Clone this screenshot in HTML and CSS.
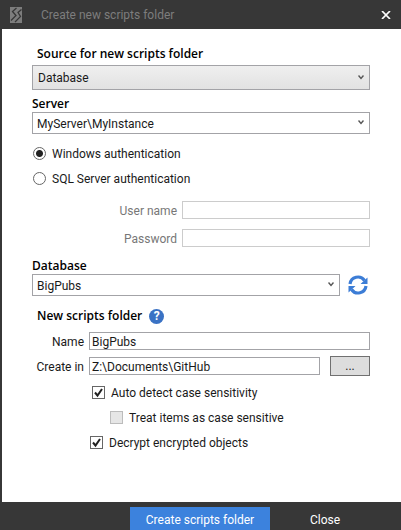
FILE: index.html
```html
<!DOCTYPE html>
<html lang="en">
  <head>
    <meta charset="UTF-8" />
    <meta name="viewport" content="width=device-width, initial-scale=1.0" />
    <title>Create new scripts folder</title>
    <link rel="stylesheet" href="styles.css">
  </head>
  <body>
    <div class="dialog">
      <header class="title-bar">
        <svg class="logo" viewBox="0 0 12 16" aria-hidden="true">
          <rect width="12" height="16" fill="#7d7d7d" />
          <path d="M6.5 1 L2.5 4.5 L6 8.5 L1 13.5 M11.5 2.5 L8 5.5 L10.5 9.5 L5 15" fill="none" stroke="#373737" stroke-width="1.3" />
        </svg>
        <h1 class="title">Create new scripts folder</h1>
        <button type="button" class="close-icon" aria-label="Close window">
          <svg viewBox="0 0 10 8" width="10" height="8">
            <path d="M1 0 L9 8 M9 0 L1 8" stroke="#fff" stroke-width="1.7" />
          </svg>
        </button>
      </header>

      <form class="form" id="scripts-form">
        <label class="heading indent" for="source">Source for new scripts folder</label>
        <div class="select-box">
          <select id="source" class="source">
            <option>Database</option>
          </select>
          <svg class="arrow" viewBox="0 0 6 5"><path d="M0.5 0.5 L3 3.5 L5.5 0.5" /></svg>
        </div>

        <label class="heading" for="server">Server</label>
        <div class="select-box">
          <select id="server">
            <option>MyServer\MyInstance</option>
          </select>
          <svg class="arrow" viewBox="0 0 6 5"><path d="M0.5 0.5 L3 3.5 L5.5 0.5" /></svg>
        </div>

        <div class="options auth">
          <label class="option"><input type="radio" name="auth" checked /><span>Windows authentication</span></label>
          <label class="option"><input type="radio" name="auth" /><span>SQL Server authentication</span></label>
        </div>

        <div class="credentials">
          <label for="user">User name</label>
          <input type="text" id="user" disabled />
          <label for="password">Password</label>
          <input type="password" id="password" disabled />
        </div>

        <label class="heading database" for="database">Database</label>
        <div class="database-row">
          <div class="select-box">
            <select id="database">
              <option>BigPubs</option>
            </select>
            <svg class="arrow" viewBox="0 0 6 5"><path d="M0.5 0.5 L3 3.5 L5.5 0.5" /></svg>
          </div>
          <button type="button" class="refresh" aria-label="Refresh databases">
            <svg viewBox="0 0 20 20" width="20" height="20">
              <g fill="none" stroke="#3c7dd6" stroke-width="3.2">
                <path d="M2 9 A8 8 0 0 1 16.5 5.5" />
                <path d="M18 11 A8 8 0 0 1 3.5 14.5" />
              </g>
              <path d="M19.5 2.5 V9 H12.5 Z M0.5 17.5 V11 H7.5 Z" fill="#3c7dd6" />
            </svg>
          </button>
        </div>

        <div class="folder-heading">
          <h2>New scripts folder</h2>
          <button type="button" class="help" aria-label="Help">?</button>
        </div>
        <div class="folder">
          <label for="name">Name</label>
          <input type="text" id="name" value="BigPubs" />
          <label for="path">Create in</label>
          <div class="path-row">
            <input type="text" id="path" value="Z:\Documents\GitHub" />
            <button type="button" class="browse">...</button>
          </div>
        </div>

        <div class="options checks">
          <label class="option auto"><input type="checkbox" checked /><span>Auto detect case sensitivity</span></label>
          <label class="option nested"><input type="checkbox" disabled /><span>Treat items as case sensitive</span></label>
          <label class="option"><input type="checkbox" checked /><span>Decrypt encrypted objects</span></label>
        </div>
      </form>

      <footer class="footer">
        <button type="submit" form="scripts-form" class="create">Create scripts folder</button>
        <button type="button" class="close">Close</button>
      </footer>
    </div>
  </body>
</html>
```

FILE: styles.css
```css
* {
  box-sizing: border-box;
}
body {
  margin: 0;
  background-color: #373737;
}
body,
input,
select,
button {
  font-family: Roboto, "Open Sans", sans-serif;
  font-size: 12px;
  line-height: 16px;
  color: #1a1a1a;
}
button {
  border: none;
  background: none;
  padding: 0;
}
.dialog {
  min-height: 100vh;
  display: flex;
  flex-direction: column;
}

/* title bar */
.title-bar {
  display: flex;
  align-items: center;
  height: 29px;
  padding: 0 10px;
}
.logo {
  width: 12px;
  height: 16px;
  margin-right: 19px;
}
.title {
  flex: 1;
  margin: 0;
  font-size: 12px;
  font-weight: 400;
  color: #7d7d7d;
}
.close-icon {
  display: flex;
}

/* form */
.form {
  flex: 1;
  margin-left: 2px;
  padding: 17px 31px 20px 30px;
  background-color: #fff;
}
.heading {
  display: block;
  height: 16px;
  margin-top: 6px;
}
.heading,
.folder-heading h2 {
  font-family: "Open Sans", "Noto Sans", sans-serif;
  font-size: 12px;
  font-weight: 600;
  color: #000;
}
.heading.indent {
  height: 19px;
  margin-top: 0;
  padding-left: 5px;
}
.heading.database {
  margin-top: 11px;
}
.select-box {
  position: relative;
  flex: 1;
}
.select-box select {
  display: block;
  width: 100%;
  height: 22px;
  padding: 2px 20px 0 4px;
  border: 1px solid #a3a3a7;
  border-radius: 0;
  background-color: #fff;
  appearance: none;
}
.select-box .source {
  height: 25px;
  padding: 0 20px 0 5px;
  background: linear-gradient(#efefef, #e2e2e2);
}
.arrow {
  position: absolute;
  top: 50%;
  right: 6px;
  width: 6px;
  height: 5px;
  margin-top: -3px;
  fill: none;
  stroke: #555;
  stroke-width: 1.4;
  pointer-events: none;
}

.options {
  display: flex;
  flex-direction: column;
  gap: 7px;
}
.option {
  display: flex;
  align-items: center;
  gap: 6px;
  height: 18px;
}
.option span {
  padding-top: 2px;
}
.option input {
  width: 13px;
  height: 13px;
  margin: 0;
  border: 1px solid #666;
  background: #fff center no-repeat;
  appearance: none;
}
.auth {
  margin-top: 10px;
  padding-left: 1px;
}
.option input[type="radio"] {
  border-radius: 50%;
}
.option input[type="radio"]:checked {
  background-image: radial-gradient(circle, #222 3px, transparent 4px);
}
.option input[type="checkbox"]:checked {
  background-image: url("data:image/svg+xml,%3Csvg xmlns='http://www.w3.org/2000/svg' width='11' height='11'%3E%3Cpath d='M2 5.5 L4.5 8.5 L9 2' fill='none' stroke='%23222' stroke-width='2'/%3E%3C/svg%3E");
}
.option input[type="checkbox"]:disabled {
  border-color: #bcbcbc;
  background-color: #e6e6e6;
}

input[type="text"],
input[type="password"] {
  width: 100%;
  min-width: 0;
  height: 18px;
  padding: 2px 2px 0;
  border: 1px solid #a3a3a7;
  background-color: #fff;
}
.credentials {
  display: grid;
  grid-template-columns: 145px 1fr;
  gap: 10px 5px;
  align-items: center;
  margin-top: 14px;
  color: #777;
  text-align: right;
}
.credentials label,
.folder label {
  padding-top: 2px;
}
.credentials input:disabled {
  border-color: #ccc;
}

.database-row {
  display: flex;
  align-items: center;
  gap: 8px;
}
.refresh {
  display: flex;
  width: 22px;
}

.folder-heading {
  display: flex;
  align-items: center;
  gap: 7px;
  height: 16px;
  margin: 12px 0 8px;
  padding-left: 5px;
}
.folder-heading h2 {
  margin: 0;
}
.help {
  width: 15px;
  height: 15px;
  border-radius: 50%;
  background-color: #3a72c4;
  color: #fff;
  font-weight: 700;
  line-height: 15px;
}
.folder {
  display: grid;
  grid-template-columns: 52px 1fr;
  gap: 6px 5px;
  align-items: center;
}
.folder label {
  text-align: right;
}
.path-row {
  display: flex;
  align-items: center;
  gap: 10px;
}
.browse {
  flex: 0 0 40px;
  height: 20px;
  border: 1px solid #707070;
  background-color: #ddd;
}
.checks {
  margin-top: 7px;
  padding-left: 58px;
}
.auto {
  padding-left: 2px;
}
.nested {
  padding-left: 20px;
}

/* buttons */
.footer {
  display: flex;
  height: 28px;
  padding: 5px 16px 0 130px;
}
.footer button {
  color: #fff;
  height: 23px;
  padding-top: 3px;
}
.create {
  flex: 0 0 140px;
}
.footer .create {
  background-color: #3c82dd;
}
.close {
  width: 110px;
}
```
